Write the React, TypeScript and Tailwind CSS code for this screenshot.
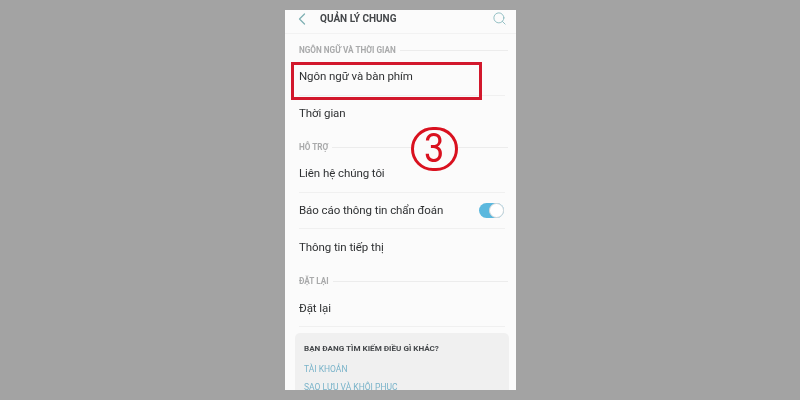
import { ChevronLeft, Search } from 'lucide-react';

function SectionLabel({ text }: { text: string }) {
  return (
    <div className="flex items-center gap-1 pl-[14px] pr-[8px] h-[17px]">
      <span className="text-[8.2px] font-bold text-[#a9aaab] whitespace-nowrap">{text}</span>
      <div className="flex-1 h-px bg-[#ececec]" />
    </div>
  );
}

function Row({ text, divider = true, children }: { text: string; divider?: boolean; children?: React.ReactNode }) {
  return (
    <div className={`flex items-center justify-between h-[36.5px] ml-[14px] mr-[11px] ${divider ? 'border-b border-[#f0f0f0]' : ''}`}>
      <span className="text-[11.5px] text-[#2f3133] tracking-[-0.08px]">{text}</span>
      {children}
    </div>
  );
}

export default function App() {
  return (
    <div className="w-[800px] h-[400px] bg-[#a3a3a3] flex justify-center overflow-hidden font-['Roboto',sans-serif]">
      <div className="relative w-[231px] h-[380px] mt-[10px] bg-[#fbfbfb] overflow-hidden ml-[1px] blur-[0.4px]">
        <div className="flex items-center h-[17px] pl-[7px] pr-[9px] box-content pb-[6px]">
          <ChevronLeft className="w-[20px] h-[20px] text-[#7fb0b3]" strokeWidth={1.5} />
          <span className="ml-[8px] text-[10px] font-bold text-[#45484b]">QUẢN LÝ CHUNG</span>
          <Search className="w-[15px] h-[15px] text-[#8dbcc0] ml-auto" strokeWidth={1.5} />
        </div>
        <div className="h-px bg-[#f2f2f2]" />
        <div className="pt-[8px]" />
        <SectionLabel text="NGÔN NGỮ VÀ THỜI GIAN" />
        <Row text="Ngôn ngữ và bàn phím" />
        <Row text="Thời gian" divider={false} />
        <div className="pt-[7px]" />
        <SectionLabel text="HỖ TRỢ" />
        <Row text="Liên hệ chúng tôi" />
        <Row text="Báo cáo thông tin chẩn đoán">
          <div className="relative w-[25px] h-[15px] rounded-full bg-[#5bb8de] mr-[1px]">
            <div className="absolute right-0 top-0 w-[15px] h-[15px] rounded-full bg-white border border-[#d9d9d9]" />
          </div>
        </Row>
        <Row text="Thông tin tiếp thị" divider={false} />
        <div className="pt-[7px]" />
        <SectionLabel text="ĐẶT LẠI" />
        <div className="pt-[1px]" />
        <Row text="Đặt lại" />
        <div className="ml-[10px] mr-[7px] mt-[6px] h-[80px] rounded-t-[5px] bg-[#f0f0f0] pl-[9px] pt-[9px]">
          <div className="text-[8.1px] font-bold text-[#45484b] leading-[13px]">BẠN ĐANG TÌM KIẾM ĐIỀU GÌ KHÁC?</div>
          <div className="mt-[8px] text-[8.5px] text-[#79b3c9] leading-[13px]">TÀI KHOẢN</div>
          <div className="mt-[5px] text-[8.5px] text-[#79b3c9] leading-[13px]">SAO LƯU VÀ KHÔI PHỤC</div>
        </div>
        <div className="absolute left-[6px] top-[52px] w-[191px] h-[38px] border-[3px] border-[#d2182c]" />
        <div className="absolute left-[126px] top-[117px] w-[47px] h-[44px] rounded-full border-[3px] border-[#d9111f] bg-[#fbfbfb] flex items-center justify-center text-[40px] font-normal leading-none text-[#d9111f]">
          <span className="inline-block scale-x-90">3</span>
        </div>
      </div>
    </div>
  );
}
